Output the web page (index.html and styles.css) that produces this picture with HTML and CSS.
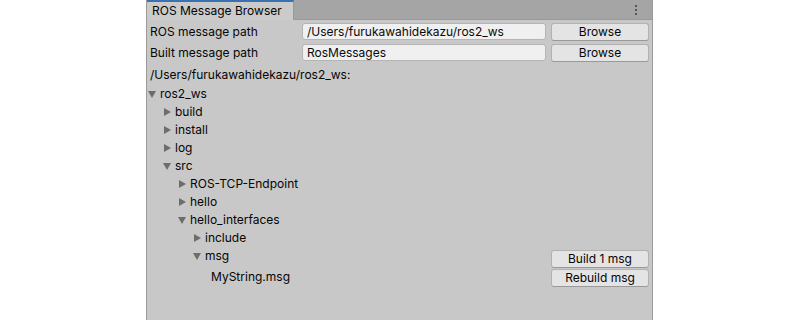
FILE: index.html
```html
<!DOCTYPE html>
<html>
<head>
<meta charset="utf-8">
<link rel="stylesheet" href="styles.css">
</head>
<body>
<div class="panel">
  <div class="tabbar">
    <div class="tab">ROS Message Browser</div>
    <div class="menu"><span></span><span></span><span></span></div>
  </div>
  <div class="content">
    <div class="field-row">
      <div class="label">ROS message path</div>
      <div class="input">/Users/furukawahidekazu/ros2_ws</div>
      <div class="btn">Browse</div>
    </div>
    <div class="field-row">
      <div class="label">Built message path</div>
      <div class="input">RosMessages</div>
      <div class="btn">Browse</div>
    </div>
    <div class="path">/Users/furukawahidekazu/ros2_ws:</div>
    <div class="tree">
      <div class="node l0"><span class="arrow open"></span>ros2_ws</div>
      <div class="node l1"><span class="arrow"></span>build</div>
      <div class="node l1"><span class="arrow"></span>install</div>
      <div class="node l1"><span class="arrow"></span>log</div>
      <div class="node l1"><span class="arrow open"></span>src</div>
      <div class="node l2"><span class="arrow"></span>ROS-TCP-Endpoint</div>
      <div class="node l2"><span class="arrow"></span>hello</div>
      <div class="node l2"><span class="arrow open"></span>hello_interfaces</div>
      <div class="node l3"><span class="arrow"></span>include</div>
      <div class="node l3 row-msg"><span class="arrow open"></span><span class="name">msg</span><div class="btn small b1">Build 1 msg</div></div>
      <div class="node file row-file"><span class="name">MyString.msg</span><div class="btn small b2">Rebuild msg</div></div>
    </div>
  </div>
</div>
</body>
</html>
```
FILE: styles.css
```css
html, body {
  margin: 0;
  padding: 0;
  background: #ffffff;
}
body {
  font-family: Inter, "Noto Sans", sans-serif;
  font-size: 12px;
  color: #050505;
}
.panel {
  width: 505px;
  height: 320px;
  margin-left: 146px;
  background: #c8c8c8;
  border-left: 1px solid #9a9a9a;
  border-right: 1px solid #9a9a9a;
  box-sizing: content-box;
}
.tabbar {
  height: 19px;
  background: #a5a5a5;
  display: flex;
  align-items: stretch;
  justify-content: space-between;
  border-bottom: 1px solid #999;
}
.tab {
  width: 147px;
  background: #cbcbcb;
  border-top: 2px solid #3a72b0;
  border-right: 1px solid #999;
  padding-left: 5px;
  box-sizing: border-box;
  line-height: 17px;
  height: 20px;
  margin-bottom: -1px;
  white-space: nowrap;
}
.menu {
  display: flex;
  flex-direction: column;
  gap: 2px;
  padding: 5px 15px 0 0;
}
.menu span {
  width: 2px;
  height: 2px;
  background: #555;
}
.content {
  padding: 1px 3px 0 3px;
}
.field-row {
  display: flex;
  align-items: center;
  height: 21px;
}
.label {
  width: 152px;
  flex: none;
}
.input {
  width: 238px;
  height: 15px;
  line-height: 15px;
  background: #f0f0f0;
  border: 1px solid #b5b5b5;
  border-radius: 3px;
  padding-left: 4px;
  box-sizing: content-box;
  flex: none;
  margin-right: 5px;
  color: #0a0a0a;
}
.btn {
  width: 96px;
  height: 16px;
  line-height: 16px;
  text-align: center;
  background: #e4e4e4;
  border: 1px solid #b2b2b2;
  border-bottom-color: #999;
  border-radius: 3px;
}
.path {
  height: 19px;
  line-height: 19px;
  margin-top: 2px;
}
.tree {
  margin-top: 1px;
  margin-left: -2px;
}
.node {
  height: 18px;
  line-height: 18px;
  display: flex;
  align-items: center;
}
.arrow {
  width: 9px;
  height: 8px;
  margin-right: 3px;
  position: relative;
  flex: none;
}
.arrow::before {
  content: "";
  position: absolute;
  left: 1px;
  top: 0;
  border-top: 4px solid transparent;
  border-bottom: 4px solid transparent;
  border-left: 7px solid #6d6d6d;
}
.arrow.open::before {
  left: 0;
  top: 1px;
  border-left: 4px solid transparent;
  border-right: 4px solid transparent;
  border-top: 7px solid #6d6d6d;
  border-bottom: 0;
}
.l0 { padding-left: 0; }
.l1 { padding-left: 15px; }
.l2 { padding-left: 30px; }
.l3 { padding-left: 45px; }
.file { padding-left: 63px; }
.row-msg {
  height: 21px;
  align-items: flex-start;
}
.row-msg .arrow {
  margin-top: 5px;
}
.row-file {
  height: 20px;
  align-items: flex-start;
}
.btn.small {
  margin-left: auto;
}
.b1 { margin-top: 3px; }
.b2 { margin-top: 1px; }
```
